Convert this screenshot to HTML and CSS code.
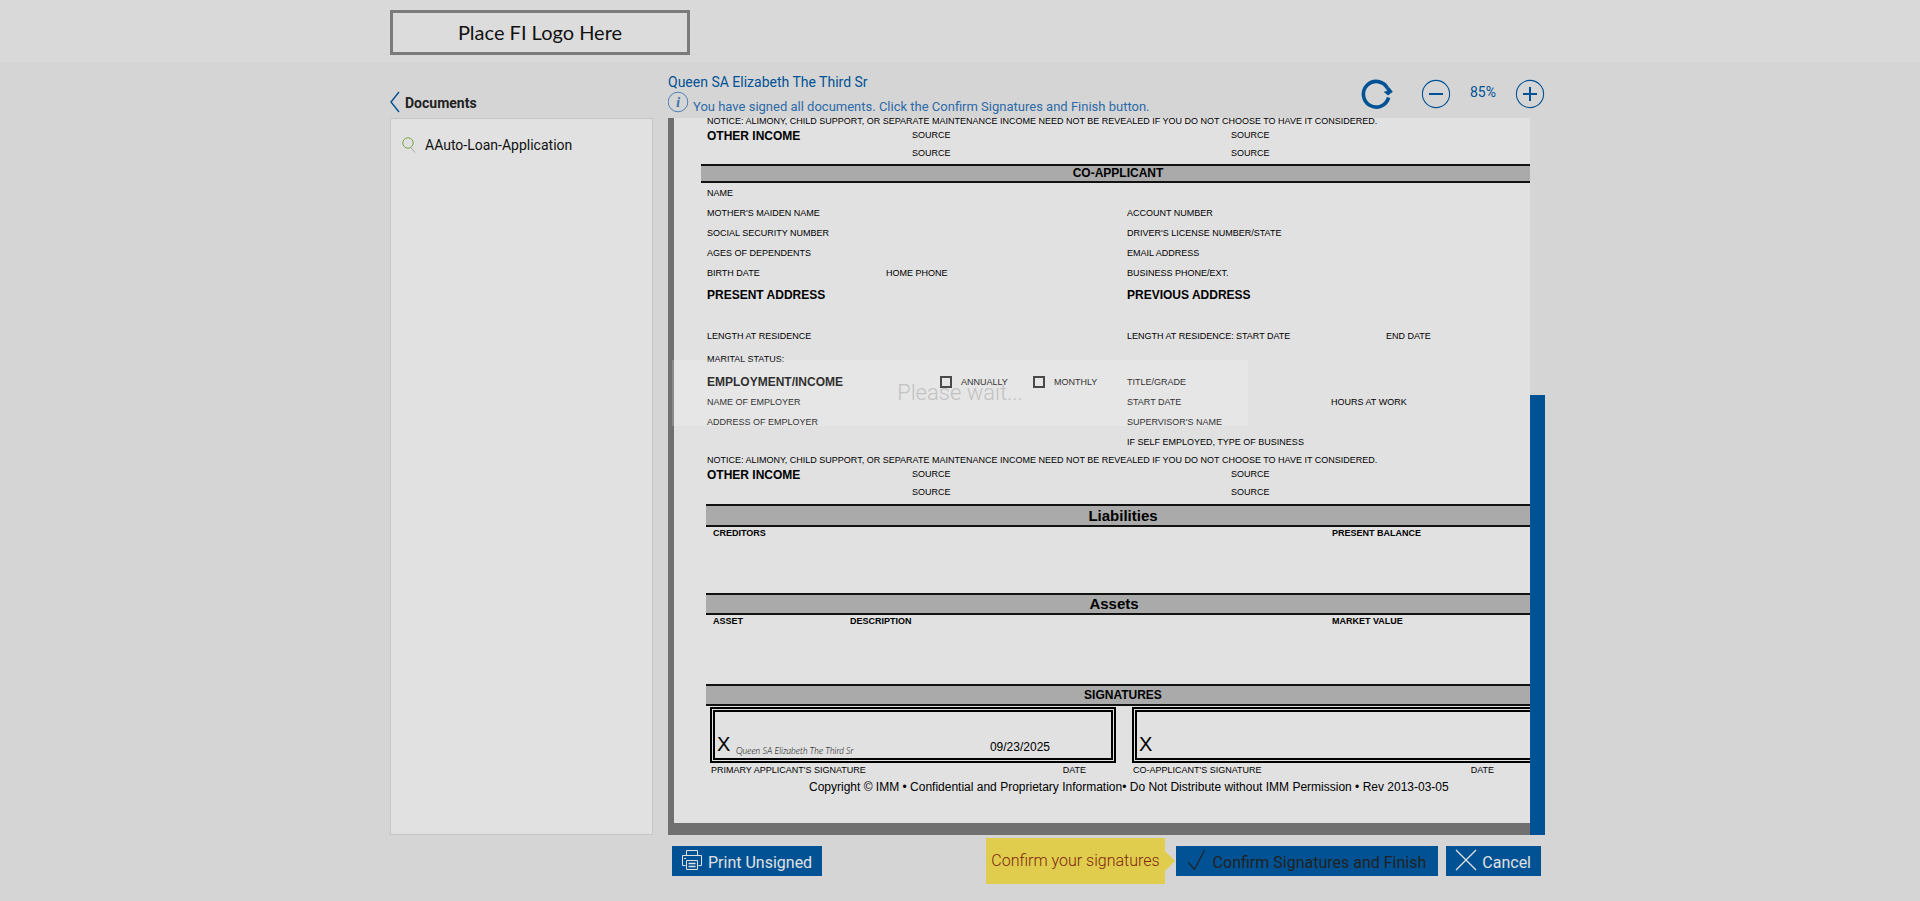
FILE: index.html
```
<!DOCTYPE html>
<html lang="en">
<head>
  <meta charset="UTF-8">
  <meta name="viewport" content="width=device-width, initial-scale=1.0">
  <title>Sign Documents</title>
  <link rel="stylesheet" href="styles.css">
</head>
<body>
  <header class="site-header">
    <div class="container">
      <div class="logo">Place FI Logo Here</div>
    </div>
  </header>

  <main class="container layout">
    <aside class="sidebar">
      <div class="sidebar-head">
        <button type="button" class="icon-button" aria-label="Back">
          <svg width="10" height="22" viewBox="0 0 10 22"><path d="M9 1 L1 11 L9 21" fill="none" stroke="#005294" stroke-width="1.4"/></svg>
        </button>
        <h2>Documents</h2>
      </div>
      <nav class="doc-list">
        <a href="#" class="doc-link">
          <svg width="14" height="16" viewBox="0 0 14 16" fill="none"><circle cx="6" cy="6" r="5.2" stroke="#78a545"/><path d="M8.8 10.5 L13 15.5" stroke="#a9a9a9"/></svg>
          <span>AAuto-Loan-Application</span>
        </a>
      </nav>
    </aside>

    <section class="content">
      <div class="toolbar">
        <div class="signer">
          <h1>Queen SA Elizabeth The Third Sr</h1>
          <p>
            <svg width="22" height="22" viewBox="0 0 22 22"><circle cx="10" cy="11" r="9.8" fill="none" stroke="#3f78b0" stroke-width="0.9"/><text x="10" y="16" class="info-letter">i</text></svg>
            <span>You have signed all documents. Click the Confirm Signatures and Finish button.</span>
          </p>
        </div>
        <div class="zoom-tools">
          <button type="button" class="icon-button refresh" aria-label="Refresh">
            <svg width="32" height="30" viewBox="0 0 32 30"><path d="M26.5 9.2 A12.8 12.8 0 1 0 27.6 18.5" fill="none" stroke="#005294" stroke-width="3.6"/><path d="M28.2 8.2 L31.8 12.8 L27 16.4 L22.6 12.8 L26 12 L25 9.4 Z" fill="#005294"/></svg>
          </button>
          <button type="button" class="icon-button" aria-label="Zoom out">
            <svg width="30" height="30" viewBox="0 0 30 30" fill="none" stroke="#005294"><circle cx="15" cy="15" r="13.6" stroke-width="1.1"/><path d="M8 15 H22" stroke-width="2"/></svg>
          </button>
          <span class="zoom-value">85%</span>
          <button type="button" class="icon-button" aria-label="Zoom in">
            <svg width="30" height="30" viewBox="0 0 30 30" fill="none" stroke="#005294"><circle cx="15" cy="15" r="13.6" stroke-width="1.1"/><path d="M8 15 H22 M15 8 V22" stroke-width="2"/></svg>
          </button>
        </div>
      </div>

      <div class="viewer">
        <div class="viewport">
          <div class="paper">
            <p class="row notice">NOTICE: ALIMONY, CHILD SUPPORT, OR SEPARATE MAINTENANCE INCOME NEED NOT BE REVEALED IF YOU DO NOT CHOOSE TO HAVE IT CONSIDERED.</p>
            <div class="row row-income"><h3>OTHER INCOME</h3><span>SOURCE</span><span>SOURCE</span></div>
            <div class="row row-income second"><span></span><span>SOURCE</span><span>SOURCE</span></div>

            <h2 class="band band-wide">CO-APPLICANT</h2>
            <div class="row row-pair"><span>NAME</span></div>
            <div class="row row-pair"><span>MOTHER'S MAIDEN NAME</span><span>ACCOUNT NUMBER</span></div>
            <div class="row row-pair"><span>SOCIAL SECURITY NUMBER</span><span>DRIVER'S LICENSE NUMBER/STATE</span></div>
            <div class="row row-pair"><span>AGES OF DEPENDENTS</span><span>EMAIL ADDRESS</span></div>
            <div class="row row-phone"><span>BIRTH DATE</span><span>HOME PHONE</span><span>BUSINESS PHONE/EXT.</span></div>
            <div class="row row-pair address"><h3>PRESENT ADDRESS</h3><h3>PREVIOUS ADDRESS</h3></div>
            <div class="row row-residence"><span>LENGTH AT RESIDENCE</span><span>LENGTH AT RESIDENCE:</span><span>START DATE</span><span>END DATE</span></div>
            <div class="row row-pair marital"><span>MARITAL STATUS:</span></div>
            <div class="row row-employment">
              <h3>EMPLOYMENT/INCOME</h3>
              <label><input type="checkbox">ANNUALLY</label>
              <label><input type="checkbox">MONTHLY</label>
              <span>TITLE/GRADE</span>
            </div>
            <div class="row row-work"><span>NAME OF EMPLOYER</span><span>START DATE</span><span>HOURS AT WORK</span></div>
            <div class="row row-work"><span>ADDRESS OF EMPLOYER</span><span>SUPERVISOR'S NAME</span></div>
            <div class="row row-work"><span></span><span>IF SELF EMPLOYED, TYPE OF BUSINESS</span></div>
            <p class="row notice">NOTICE: ALIMONY, CHILD SUPPORT, OR SEPARATE MAINTENANCE INCOME NEED NOT BE REVEALED IF YOU DO NOT CHOOSE TO HAVE IT CONSIDERED.</p>
            <div class="row row-income"><h3>OTHER INCOME</h3><span>SOURCE</span><span>SOURCE</span></div>
            <div class="row row-income second"><span></span><span>SOURCE</span><span>SOURCE</span></div>

            <h2 class="band large">Liabilities</h2>
            <div class="row row-liabilities"><span>CREDITORS</span><span>PRESENT BALANCE</span></div>

            <h2 class="band large assets">Assets</h2>
            <div class="row row-assets"><span>ASSET</span><span>DESCRIPTION</span><span>MARKET VALUE</span></div>

            <h2 class="band">SIGNATURES</h2>
            <div class="signatures">
              <div class="signature">
                <div class="sign-box">
                  <span class="sign-x">X</span>
                  <span class="sign-name">Queen SA Elizabeth The Third Sr</span>
                  <span class="sign-date">09/23/2025</span>
                </div>
                <div class="sign-caption"><span>PRIMARY APPLICANT'S SIGNATURE</span><span>DATE</span></div>
              </div>
              <div class="signature">
                <div class="sign-box"><span class="sign-x">X</span></div>
                <div class="sign-caption co-caption"><span>CO-APPLICANT'S SIGNATURE</span><span>DATE</span></div>
              </div>
            </div>
            <p class="copyright">Copyright © IMM • Confidential and Proprietary Information• Do Not Distribute without IMM Permission • Rev 2013-03-05</p>
          </div>
          <div class="wait">Please wait...</div>
        </div>
        <div class="scroll-track"><div class="scroll-thumb"></div></div>
      </div>

      <div class="actions">
        <button type="button" class="btn">
          <svg width="22" height="22" viewBox="0 0 22 22" fill="none" stroke="#e1e1e1"><path d="M5.5 6 V1.5 H16.5 V6 M4.5 16.5 H1.5 V6.5 H20.5 V16.5 H17.5 M5.5 11.5 H16.5 V20.5 H5.5 Z M3 9.5 H5"/><path d="M7.5 14.5 H14.5 M7.5 17.5 H14.5" stroke-width="1.5"/></svg>
          <span>Print Unsigned</span>
        </button>
        <div class="tip">Confirm your signatures</div>
        <button type="button" class="btn btn-confirm">
          <svg width="20" height="22" viewBox="0 0 20 22" fill="none" stroke="#222"><path d="M1.5 13.5 L7.5 20.5 L17.5 1" stroke-width="1.2"/></svg>
          <span>Confirm Signatures and Finish</span>
        </button>
        <button type="button" class="btn">
          <svg width="22" height="22" viewBox="0 0 22 22" fill="none" stroke="#e1e1e1"><path d="M1 1 L21 21 M21 1 L1 21" stroke-width="1.3"/></svg>
          <span>Cancel</span>
        </button>
      </div>
    </section>
  </main>
</body>
</html>
```
FILE: styles.css
```
* {
  box-sizing: border-box;
}

body {
  margin: 0;
  min-height: 100vh;
  background-color: #d5d5d5;
  font-family: Roboto, Arial, sans-serif;
  color: #111;
}

h1, h2, h3, p {
  margin: 0;
}

svg {
  display: block;
  flex-shrink: 0;
}

button {
  font-family: inherit;
  cursor: pointer;
}

.container {
  max-width: 1170px;
  margin: 0 auto;
  padding-left: 15px;
}

/* header */
.site-header {
  padding: 10px 0 7px;
  background-color: #d9d9d9;
}

.logo {
  width: 300px;
  border: 3px solid #7b7b7b;
  background-color: #dcdcdc;
  font-family: Lato, sans-serif;
  font-size: 20px;
  line-height: 39px;
  text-align: center;
}

.layout {
  display: flex;
  gap: 15px;
}

/* document list */
.sidebar {
  width: 263px;
  flex-shrink: 0;
  display: flex;
  flex-direction: column;
  margin-bottom: 52px;
}

.sidebar-head {
  height: 56px;
  display: flex;
  align-items: center;
  gap: 5px;
  padding-top: 24px;
}

.sidebar-head h2 {
  padding-top: 2px;
  font-size: 14px;
  color: #222;
}

.icon-button {
  padding: 0;
  border: 0;
  background: none;
}

.doc-list {
  flex: 1;
  padding: 16px 11px;
  border: 1px solid #c6c6c6;
  background-color: #e1e1e1;
}

.doc-link {
  display: flex;
  align-items: center;
  gap: 9px;
  font-size: 14px;
  line-height: 20px;
  color: #111;
  text-decoration: none;
}

.content {
  flex: 1;
  min-width: 0;
}

/* toolbar */
.toolbar {
  height: 56px;
  display: flex;
  justify-content: space-between;
}

.signer {
  padding-top: 11px;
  color: #005294;
}

.signer h1 {
  font-size: 14px;
  font-weight: 400;
  line-height: 18px;
}

.signer p {
  display: flex;
  align-items: flex-end;
  gap: 3px;
  font-size: 13px;
  line-height: 12px;
  color: #2c6aa8;
}

.info-letter {
  font: italic bold 15px "Liberation Serif", serif;
  fill: #3f78b0;
  text-anchor: middle;
}

.zoom-tools {
  display: flex;
  align-items: center;
  gap: 18px;
  padding-top: 8px;
}

.refresh {
  margin-right: 10px;
}

.zoom-value {
  width: 28px;
  padding-bottom: 4px;
  font-size: 14px;
  text-align: center;
  color: #005294;
}

/* document viewer */
.viewer {
  display: flex;
}

.viewport {
  position: relative;
  flex: 1;
  min-width: 0;
  overflow: hidden;
  padding: 0 0 12px 6px;
  background-color: #707070;
}

.paper {
  min-width: 1000px;
  margin-top: -3px;
  padding: 0 0 25px 33px;
  background-color: #e1e1e1;
  font-family: "Liberation Sans", Arial, sans-serif;
  font-size: 9px;
  line-height: 12px;
  color: #000;
}

.paper h3 {
  font-size: 12px;
}

.row {
  display: grid;
  align-items: center;
  height: 20px;
  white-space: nowrap;
}

.row-pair {
  grid-template-columns: 420px 1fr;
}

.row-phone {
  grid-template-columns: 179px 241px 1fr;
}

.row-income {
  grid-template-columns: 205px 319px 1fr;
  height: 15px;
}

.row-income h3 {
  padding-top: 3px;
}

.second {
  height: 22px;
}

.row-residence {
  grid-template-columns: 420px 109px 150px 1fr;
  margin-top: 19px;
}

.row-work {
  grid-template-columns: 420px 204px 1fr;
}

.row-employment {
  grid-template-columns: 233px 93px 94px 1fr;
}

.row-employment label {
  display: flex;
  align-items: center;
  gap: 9px;
}

.row-employment input {
  appearance: none;
  width: 12px;
  height: 12px;
  margin: 0;
  border: 2px solid #222;
}

.row-liabilities,
.row-assets {
  height: 12px;
  padding-left: 6px;
  font-weight: bold;
}

.row-liabilities {
  grid-template-columns: 619px 1fr;
  margin-bottom: 54px;
}

.row-assets {
  grid-template-columns: 137px 482px 1fr;
  margin-bottom: 57px;
}

.notice {
  height: 12px;
}

.row-work + .notice {
  margin-top: 2px;
}

.address {
  height: 24px;
}

.marital {
  height: 26px;
}

.band {
  width: 834px;
  margin-left: -1px;
  border-top: 2px solid #111;
  border-bottom: 2px solid #111;
  background-color: #aaa;
  font-size: 12px;
  line-height: 18px;
  text-align: center;
}

.band-wide {
  margin-left: -6px;
  line-height: 15px;
}

.large {
  font-size: 15px;
  line-height: 19px;
}

.row-income + .large {
  margin-top: 1px;
}

.assets {
  padding-right: 18px;
  line-height: 18px;
}

/* signatures */
.signatures {
  display: flex;
  gap: 16px;
  margin: 1px 0 0 3px;
}

.signature {
  width: 406px;
}

.sign-box {
  height: 56px;
  display: flex;
  align-items: flex-end;
  padding: 0 61px 2px 2px;
  border: 5px double #000;
}

.sign-x {
  width: 19px;
  font-size: 20px;
  line-height: 24px;
}

.sign-name {
  font-family: Lato, cursive;
  font-size: 9px;
  font-style: italic;
  font-weight: 300;
  line-height: 10px;
}

.sign-date {
  margin-left: auto;
  font-size: 12px;
  line-height: 18px;
}

.sign-caption {
  display: flex;
  justify-content: space-between;
  padding: 1px 30px 0 1px;
}

.co-caption {
  padding-right: 44px;
}

.copyright {
  padding-left: 102px;
  font-size: 12px;
  line-height: 22px;
}

/* loading message over the page */
.wait {
  position: absolute;
  top: 242px;
  left: 4px;
  width: 576px;
  background-color: rgba(255, 255, 255, 0.18);
  font-size: 22px;
  font-weight: 300;
  line-height: 66px;
  text-align: center;
  color: #c2c2c2;
}

.scroll-track {
  width: 15px;
  display: flex;
  align-items: flex-end;
}

.scroll-thumb {
  width: 100%;
  height: 440px;
  background-color: #005294;
}

/* bottom buttons */
.actions {
  display: flex;
  align-items: center;
  gap: 8px;
  padding: 3px 4px;
}

.btn {
  height: 30px;
  display: flex;
  align-items: center;
  gap: 5px;
  padding: 0 10px 0 9px;
  border: 0;
  background-color: #005294;
  font-size: 16px;
  color: #e1e1e1;
}

.btn svg {
  margin-bottom: 2px;
}

.btn span {
  padding-top: 3px;
}

.btn-confirm {
  gap: 6px;
  padding: 0 12px 0 11px;
  color: #222;
}

.tip {
  position: relative;
  margin: 0 3px 0 auto;
  padding: 0 5px;
  background-color: #e0cd4d;
  font-size: 16px;
  font-weight: 300;
  line-height: 46px;
  color: #7e2610;
}

.tip::after {
  content: "";
  position: absolute;
  top: 13px;
  left: 100%;
  border: 10px solid transparent;
  border-left-color: #e0cd4d;
  border-right: 0;
}
```
